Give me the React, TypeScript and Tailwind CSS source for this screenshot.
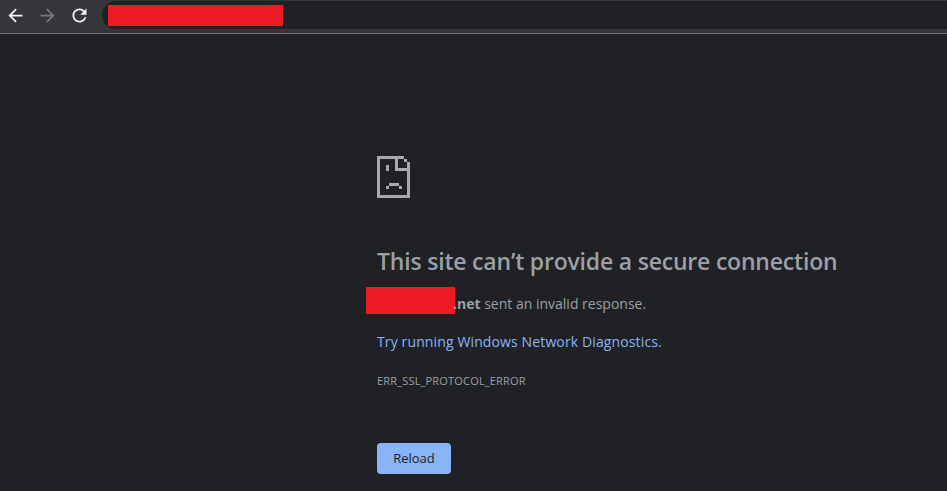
const PIXELS = [
  [0, 0, 27, 3],
  [27, 3, 3, 3],
  [30, 6, 3, 36],
  [0, 0, 3, 42],
  [0, 39, 33, 3],
  [18, 0, 3, 15],
  [18, 12, 15, 3],
  [9, 9, 3, 6],
  [9, 30, 3, 3],
  [12, 27, 10, 3],
  [22, 30, 3, 3],
];

function SadPage() {
  return (
    <svg width="33" height="42" viewBox="0 0 33 42" fill="#a8a9ab" shapeRendering="crispEdges">
      {PIXELS.map(([x, y, w, h]) => (
        <rect key={`${x}-${y}-${w}`} x={x} y={y} width={w} height={h} />
      ))}
    </svg>
  );
}

function NavIcon({ d, className }: { d: string; className: string }) {
  return (
    <svg width="21" height="21" viewBox="0 0 24 24" fill="currentColor" className={className}>
      <path d={d} />
    </svg>
  );
}

const BACK = 'M20 11H7.83l5.59-5.59L12 4l-8 8 8 8 1.41-1.41L7.83 13H20v-2z';
const FORWARD = 'M12 4l-1.41 1.41L16.17 11H4v2h12.17l-5.58 5.59L12 20l8-8z';
const RELOAD =
  'M17.65 6.35C16.2 4.9 14.21 4 12 4c-4.42 0-7.99 3.58-7.99 8s3.57 8 7.99 8c3.73 0 6.84-2.55 7.73-6h-2.08c-.82 2.33-3.04 4-5.65 4-3.31 0-6-2.69-6-6s2.69-6 6-6c1.66 0 3.14.69 4.22 1.78L13 11h7V4l-2.35 2.35z';

export default function App() {
  return (
    <div className="w-[947px] h-[491px] overflow-hidden bg-[#202124] font-['Open_Sans',sans-serif]">
      {/* Toolbar */}
      <div className="h-[34px] flex items-start pl-[5px] bg-[#35363a] border-b border-[#6f7072]">
        <NavIcon d={BACK} className="mt-[5px] text-[#f1f3f4]" />
        <NavIcon d={FORWARD} className="mt-[5px] ml-[11px] text-[#77797c]" />
        <NavIcon d={RELOAD} className="mt-[5px] ml-[11px] text-[#f1f3f4]" />
        <div className="ml-[12px] mt-[1px] flex-1 h-[28px] pl-[6px] pt-[4px] rounded-l-full bg-[#202124]">
          <div className="w-[175px] h-[21px] bg-[#ed1c24]" />
        </div>
      </div>

      {/* Error page */}
      <div className="pl-[377px] pt-[122px] flex flex-col items-start">
        <SadPage />
        <h1 className="mt-[48px] text-[23px] leading-[30px] font-semibold tracking-[-0.2px] text-[#9aa0a6] whitespace-nowrap">
          This site can’t provide a secure connection
        </h1>
        <p className="mt-[13px] h-[28px] flex items-center text-[14px] text-[#9aa0a6] whitespace-nowrap">
          <span className="ml-[-11px] mb-[5px] w-[89px] h-[27px] bg-[#ed1c24]" />
          <b className="ml-[-2px] font-bold">.net</b>&nbsp;sent an invalid response.
        </p>
        <a className="mt-[15px] text-[14px] leading-[20px] tracking-[0.125px] text-[#8ab4f8] whitespace-nowrap">
          Try running Windows Network Diagnostics.
        </a>
        <div className="mt-[21px] text-[11px] leading-[16px] tracking-[0.18px] text-[#9aa0a6] whitespace-nowrap">ERR_SSL_PROTOCOL_ERROR</div>
        <button className="mt-[54px] w-[74px] h-[31px] rounded-[4px] bg-[#8ab4f8] text-[13px] text-[#202124]">
          Reload
        </button>
      </div>
    </div>
  );
}
